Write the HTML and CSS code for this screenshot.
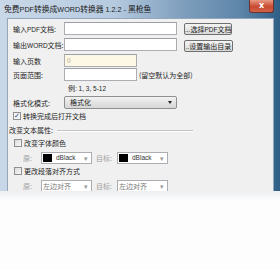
FILE: index.html
```html
<!DOCTYPE html>
<html>
<head>
<meta charset="utf-8">
<link rel="stylesheet" href="styles.css">
</head>
<body>
<div class="window">
  <div class="titlebar">
    <span class="title">免费<span class="lat">PDF</span>转换成<span class="lat">WORD</span>转换器<span class="lat"> 1.2.2 - </span>黑枪鱼</span>
    <span class="close">x</span>
  </div>
  <div class="client">
    <div class="row r1">
      <span class="label">输入<span class="lat">PDF</span>文档:</span>
      <span class="input wide"></span>
      <span class="btn"><span class="lat">...</span>选择<span class="lat">PDF</span>文档</span>
    </div>
    <div class="row r2">
      <span class="label">输出<span class="lat">WORD</span>文档:</span>
      <span class="input wide"></span>
      <span class="btn"><span class="lat">..</span>设置输出目录</span>
    </div>
    <div class="row r3">
      <span class="label">输入页数</span>
      <span class="input pages">0</span>
    </div>
    <div class="row r4">
      <span class="label">页面范围:</span>
      <span class="input range"></span>
      <span class="hint">(留空默认为全部)</span>
    </div>
    <div class="example">例<span class="lat">: 1, 3, 5-12</span></div>
    <div class="row r5">
      <span class="label">格式化模式:</span>
      <span class="select">格式化<span class="arrow"></span></span>
    </div>
    <div class="check checked-row"><span class="box checked">✓</span>转换完成后打开文档</div>
    <div class="group"><span>改变文本属性:</span><span class="line"></span></div>
    <div class="check sub"><span class="box"></span>改变字体颜色</div>
    <div class="row combos">
      <span class="dis lab1">原:</span>
      <span class="combo"><span class="swatch"></span><span class="lat dark">dBlack</span><span class="arr">▾</span></span>
      <span class="dis lab2">目标:</span>
      <span class="combo"><span class="swatch"></span><span class="lat dark">dBlack</span><span class="arr">▾</span></span>
    </div>
    <div class="check sub"><span class="box"></span>更改段落对齐方式</div>
    <div class="row combos">
      <span class="dis lab1">原:</span>
      <span class="combo">左边对齐<span class="arr">▾</span></span>
      <span class="dis lab2">目标:</span>
      <span class="combo">左边对齐<span class="arr">▾</span></span>
    </div>
  </div>
</div>
<div class="shadow"></div>
</body>
</html>
```
FILE: styles.css
```css
* { box-sizing: border-box; }
html, body { margin: 0; padding: 0; background: #fdfdfd; }
body {
  width: 280px; height: 270px; overflow: hidden;
  font-family: "Noto Sans CJK SC", "Liberation Sans", sans-serif;
  font-size: 7px; color: #1e1e1e;
}
.lat { font-family: "Liberation Sans", sans-serif; font-size: 6.5px; }
.window {
  height: 191px;
  padding: 0 6px 0 7px;
  background: linear-gradient(90deg, #c9d8e8 0%, #b7cbe0 40%, #7f9fbd 65%, #5f87aa 85%, #2f5f86 100%);
  overflow: hidden;
}
.titlebar {
  height: 18px; display: flex; align-items: center; justify-content: space-between;
  margin-left: -3px;
}
.title { font-size: 7.8px; color: #1a1a1a; margin-top: -2px; white-space: nowrap; }
.title .lat { font-size: 7.2px; }
.close {
  width: 25px; height: 13px; margin-top: -5px;
  border: 1px solid #6b3030; border-top: none; border-radius: 0 0 3px 3px;
  background: linear-gradient(#e79a86, #c9492e 55%, #d0644a);
  color: #fff; font-weight: bold; font-size: 8px; line-height: 12px; text-align: center;
  font-family: "DejaVu Sans", sans-serif;
}
.client {
  height: 173px; background: #f0f0f0; border: 1px solid #93a6bb; border-bottom: none;
  padding: 3px 0 0 4px;
}
.row { display: flex; align-items: center; }
.label { width: 52px; padding-left: 1px; white-space: nowrap; }
.input {
  height: 13px; background: #fff; border: 1px solid #abadb3;
  border-top-color: #9c9fa6;
}
.wide { width: 113px; }
.r1 { height: 13px; }
.r2 { height: 13px; margin-top: 3px; }
.r3 { height: 13px; margin-top: 3px; }
.r4 { height: 13px; margin-top: 1px; }
.pages { width: 73px; background: #fdf7e6; color: #b0a890; font-size: 6.5px; padding-left: 2px; line-height: 11px; }
.range { width: 73px; }
.hint { margin-left: 2px; white-space: nowrap; }
.btn {
  margin-left: 7px; width: 48px; height: 12px; border: 1px solid #707070; border-radius: 2px;
  background: linear-gradient(#f4f4f4, #e6e6e6 50%, #d9d9d9);
  line-height: 10px; text-align: center; white-space: nowrap; overflow: hidden;
}
.r1 .btn { margin-top: 1px; }
.r2 .btn { margin-top: 3px; width: 49px; }
.example { margin-left: 56px; height: 13px; line-height: 13px; margin-top: 1px; }
.r5 { height: 13px; margin-top: 1px; }
.select {
  position: relative; width: 113px; height: 13px; border: 1px solid #8e8f8f; border-radius: 2px;
  background: linear-gradient(#f3f3f3, #e3e3e3 50%, #d7d7d7); padding-left: 5px; line-height: 11px;
}
.arrow {
  position: absolute; right: 4px; top: 4px; width: 0; height: 0;
  border-left: 2px solid transparent; border-right: 2px solid transparent; border-top: 3px solid #222;
}
.check { display: flex; align-items: center; height: 12px; white-space: nowrap; }
.checked-row { margin-top: 1px; }
.box {
  width: 8px; height: 8px; border: 1px solid #8f8f8f; background: linear-gradient(135deg, #dcdcdc, #f8f8f8);
  margin-right: 2px; margin-left: 1px; font-size: 7px; line-height: 6px; text-align: center; color: #2a3f7a;
  font-family: "DejaVu Sans", sans-serif;
}
.box.checked { background: #f4f4f4; }
.group { display: flex; align-items: center; height: 13px; margin-left: -3px; margin-top: 1px; }
.line { width: 136px; height: 1px; background: #c4c4c4; border-bottom: 1px solid #fff; margin-left: 4px; margin-top: 2px; box-sizing: content-box; }
.sub { margin-left: 1px; margin-top: 1px; }
.combos { height: 13px; margin-top: 2px; }
.dis { color: #a0a0a0; }
.lab1 { width: 29px; padding-left: 11px; }
.lab2 { width: 25px; padding-left: 4px; }
.combo {
  position: relative; display: flex; align-items: center; width: 51px; height: 12px;
  background: #fff; border: 1px solid #abadb3; padding-left: 1px; color: #777;
}
.dark { color: #333; }
.swatch { width: 9px; height: 8px; background: #000; margin-right: 4px; }
.arr { position: absolute; right: 3px; top: 0; font-size: 7px; color: #999; line-height: 10px; }
.shadow {
  height: 10px; background: linear-gradient(#eceef0, #fdfdfd);
}
```
